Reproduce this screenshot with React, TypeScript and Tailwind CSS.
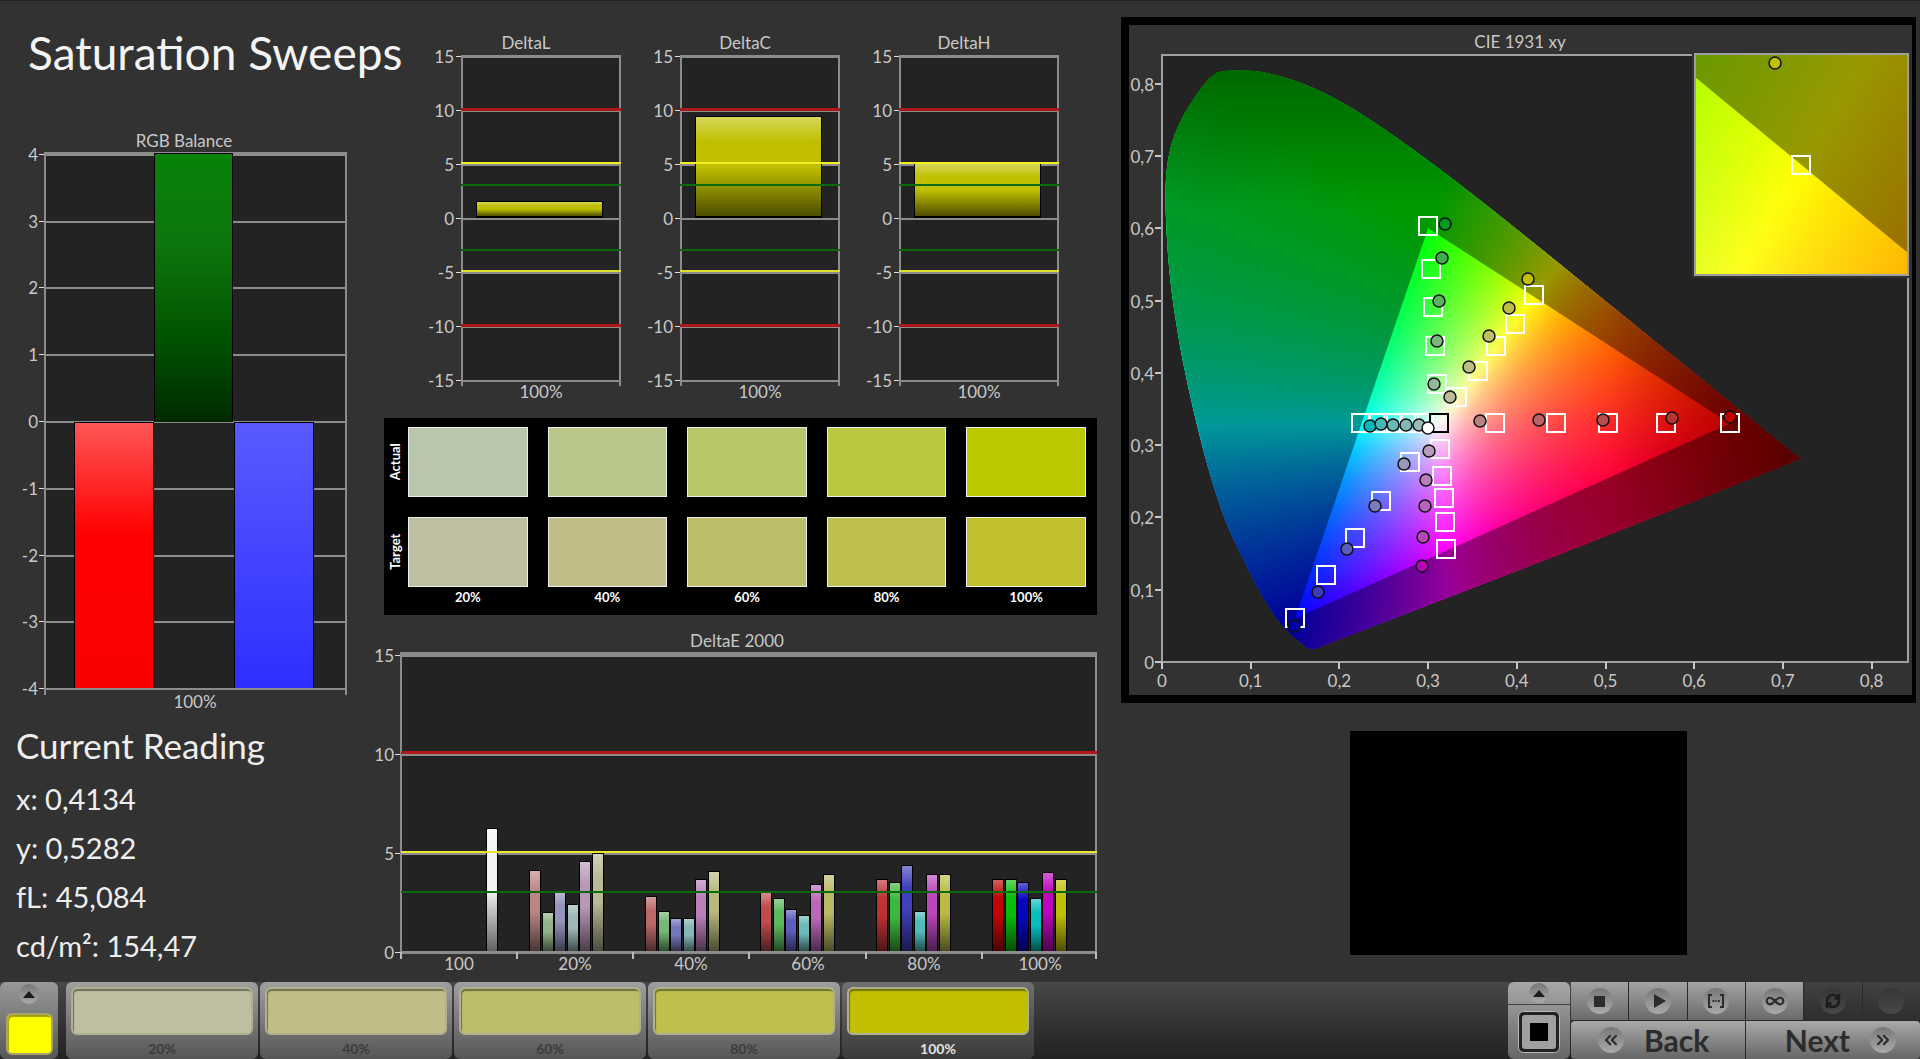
import React from 'react';
import { clsx } from 'clsx';
import { ChevronsLeft, ChevronsRight, Infinity as InfinityIcon, RefreshCw } from 'lucide-react';

const GRID = '#8c8c8c';
const LABEL = '#c8c8c8';

/* ---------- shared chart pieces ---------- */

interface BarProps {
    x: number;
    y: number;
    width: number;
    bottom: number;
    color: string;
    shade?: string;
}

const Bar: React.FC<BarProps> = ({ x, y, width, bottom, color, shade = 'url(#gloss)' }) => (
    <g>
        <rect x={x - 1} y={y - 1} width={width + 2} height={bottom - y + 1} fill="#000" />
        <rect x={x} y={y} width={width} height={bottom - y} fill={color} />
        <rect x={x} y={y} width={width} height={bottom - y} fill={shade} />
    </g>
);

const GlossDefs: React.FC = () => (
    <svg className="absolute h-0 w-0" aria-hidden="true">
        <defs>
            <linearGradient id="gloss" x1="0" y1="0" x2="0" y2="1">
                <stop offset="0" stopColor="#fff" stopOpacity="0.36" />
                <stop offset="0.25" stopColor="#fff" stopOpacity="0" />
                <stop offset="0.5" stopColor="#000" stopOpacity="0" />
                <stop offset="1" stopColor="#000" stopOpacity="0.6" />
            </linearGradient>
        </defs>
    </svg>
);

/* ---------- RGB balance ---------- */

const RGB_TICKS = [4, 3, 2, 1, 0, -1, -2, -3, -4];

const RgbBalance: React.FC = () => {
    const toY = (v: number) => Math.round(301 - v * 66.8);
    return (
        <svg viewBox="0 0 360 595" className="block h-auto w-full" role="img" aria-label="RGB Balance">
            <defs>
                <linearGradient id="rgb-green" x1="0" y1="0" x2="0" y2="1">
                    <stop offset="0" stopColor="#088208" />
                    <stop offset="0.35" stopColor="#0d750d" />
                    <stop offset="0.7" stopColor="#005200" />
                    <stop offset="1" stopColor="#002a00" />
                </linearGradient>
                <linearGradient id="rgb-red" x1="0" y1="0" x2="0" y2="1">
                    <stop offset="0" stopColor="#ff5656" />
                    <stop offset="0.42" stopColor="#ff0000" />
                    <stop offset="1" stopColor="#fb0000" />
                </linearGradient>
                <linearGradient id="rgb-blue" x1="0" y1="0" x2="0" y2="1">
                    <stop offset="0" stopColor="#5a5aff" />
                    <stop offset="1" stopColor="#2e2eff" />
                </linearGradient>
            </defs>
            <text x="184" y="27" fontSize="17" textAnchor="middle" fill={LABEL}>RGB Balance</text>
            <rect x="45" y="33" width="301" height="536" fill="#232323" />
            {RGB_TICKS.map(t => (
                <g key={t}>
                    <rect x="39" y={toY(t)} width="6" height="1" fill="#ddd" />
                    <rect x="45" y={toY(t)} width="301" height="2" fill={GRID} />
                    <text x="38" y={toY(t) + 7} fontSize="17" textAnchor="end" fill={LABEL}>{t}</text>
                </g>
            ))}
            <rect x="45" y="32" width="301" height="3" fill={GRID} />
            <Bar x={155} y={34} width={77} bottom={302} color="url(#rgb-green)" shade="none" />
            <Bar x={75} y={303} width={78} bottom={569} color="url(#rgb-red)" shade="none" />
            <Bar x={235} y={303} width={78} bottom={569} color="url(#rgb-blue)" shade="none" />
            <rect x="45" y="568" width="301" height="2" fill={GRID} />
            <rect x="44" y="32" width="2" height="543" fill={GRID} />
            <rect x="345" y="32" width="2" height="543" fill={GRID} />
            <text x="195" y="588" fontSize="17" textAnchor="middle" fill={LABEL}>100%</text>
        </svg>
    );
};

/* ---------- DeltaL / DeltaC / DeltaH ---------- */

const DELTAS = [
    { name: 'DeltaL', top: 201 },
    { name: 'DeltaC', top: 116 },
    { name: 'DeltaH', top: 163 },
];

const DELTA_TICKS = [15, 10, 5, 0, -5, -10, -15];

const LIMITS = [
    { y: 107, h: 3, color: '#b01818' },
    { y: 161, h: 2, color: '#f0f020' },
    { y: 183, h: 2, color: '#0a6a0a' },
    { y: 248, h: 2, color: '#0a6a0a' },
    { y: 269, h: 2, color: '#e0e030' },
    { y: 323, h: 3, color: '#b01818' },
];

const DeltaChart: React.FC<{ name: string; top: number }> = ({ name, top }) => {
    const toY = (v: number) => Math.round(217 - v * 10.8);
    return (
        <svg viewBox="0 0 219 417" className="block h-auto w-full" role="img" aria-label={name}>
            <text x="104" y="48" fontSize="17" textAnchor="middle" fill={LABEL}>{name}</text>
            <rect x="40" y="55" width="158" height="324" fill="#232323" />
            {DELTA_TICKS.map(t => (
                <g key={t}>
                    <rect x="34" y={toY(t)} width="6" height="1" fill="#ddd" />
                    <rect x="40" y={toY(t)} width="158" height="2" fill={GRID} />
                    <text x="32" y={toY(t) + 7} fontSize="17" textAnchor="end" fill={LABEL}>{t}</text>
                </g>
            ))}
            <rect x="40" y="54" width="158" height="3" fill={GRID} />
            <Bar x={55} y={top} width={125} bottom={215} color="#c0c000" />
            <rect x="54" y="215" width="127" height="2" fill="#000" />
            <rect x="39" y="54" width="2" height="331" fill={GRID} />
            <rect x="197" y="54" width="2" height="331" fill={GRID} />
            {LIMITS.map(l => (
                <rect key={l.y} x="39" y={l.y} width="160" height={l.h} fill={l.color} />
            ))}
            <text x="119" y="397" fontSize="17" textAnchor="middle" fill={LABEL}>100%</text>
        </svg>
    );
};

/* ---------- actual / target swatches ---------- */

const LEVELS = ['20%', '40%', '60%', '80%', '100%'];

const SWATCH_ROWS = [
    { label: 'Actual', colors: ['bg-[#b8c6ac]', 'bg-[#b9c78b]', 'bg-[#b8c76a]', 'bg-[#b9c741]', 'bg-[#b9c800]'] },
    { label: 'Target', colors: ['bg-[#bebea2]', 'bg-[#c0be86]', 'bg-[#bebd6a]', 'bg-[#bebf4d]', 'bg-[#c0c02c]'] },
];

const SwatchPanel: React.FC = () => (
    <div className="ml-[14px] bg-black pt-[9px] pr-[11px] pb-2 text-white">
        <div className="flex flex-col gap-5">
            {SWATCH_ROWS.map(row => (
                <div key={row.label} className="flex">
                    <div className="flex w-6 items-center justify-center">
                        <span className="-rotate-90 text-[13px] font-bold">{row.label}</span>
                    </div>
                    <div className="grid flex-1 grid-cols-5 gap-5">
                        {row.colors.map(c => (
                            <div key={c} className={clsx('h-[70px] border border-[#eee]', c)} />
                        ))}
                    </div>
                </div>
            ))}
        </div>
        <div className="grid grid-cols-5 gap-5 pl-6 text-center text-[13px] leading-5 font-bold">
            {LEVELS.map(l => (
                <span key={l}>{l}</span>
            ))}
        </div>
    </div>
);

/* ---------- DeltaE 2000 ---------- */

const DELTA_E = [
    { label: '100', x: 75, start: 103, tops: [214], colors: ['#f4f4f4'] },
    { label: '20%', x: 191, start: 146, tops: [256, 298, 277, 290, 247, 239], colors: ['#bd8686', '#92b28a', '#9494bc', '#9db8b8', '#b898b8', '#b9b998'] },
    { label: '40%', x: 307, start: 262, tops: [282, 297, 304, 304, 265, 257], colors: ['#bd6868', '#76b876', '#7676bc', '#86b6b6', '#b97fb9', '#b9b97c'] },
    { label: '60%', x: 424, start: 377, tops: [278, 284, 295, 301, 270, 260], colors: ['#be4c4c', '#5cb85c', '#5e5ebc', '#6eb9b9', '#b968b9', '#bab963'] },
    { label: '80%', x: 540, start: 493, tops: [265, 268, 251, 297, 260, 260], colors: ['#be3232', '#3cb83c', '#4040bd', '#50baba', '#bb48bb', '#bbbb46'] },
    { label: '100%', x: 656, start: 609, tops: [265, 265, 268, 284, 258, 265], colors: ['#be0606', '#08be08', '#0606be', '#0abebe', '#be06be', '#bebe06'] },
];

const DeltaEChart: React.FC = () => (
    <svg viewBox="-14 0 727 361" className="block h-auto w-full" role="img" aria-label="DeltaE 2000">
        <text x="353" y="32" fontSize="17" textAnchor="middle" fill={LABEL}>DeltaE 2000</text>
        <rect x="17" y="38" width="696" height="299" fill="#232323" />
        {[15, 10, 5, 0].map(t => {
            const y = Math.round(336 - t * 19.8);
            return (
                <g key={t}>
                    <rect x="11" y={y + 1} width="6" height="1" fill="#ddd" />
                    <rect x="17" y={y + 1} width="696" height="2" fill={GRID} />
                    <text x="10" y={y + 8} fontSize="17" textAnchor="end" fill={LABEL}>{t}</text>
                </g>
            );
        })}
        <rect x="17" y="37" width="696" height="3" fill={GRID} />
        {DELTA_E.map(group => (
            <g key={group.label}>
                {group.tops.map((top, i) => (
                    <Bar key={i} x={group.start + Math.round(i * 12.6)} y={top} width={10} bottom={336} color={group.colors[i]} />
                ))}
                <text x={group.x} y="355" fontSize="17" textAnchor="middle" fill={LABEL}>{group.label}</text>
            </g>
        ))}
        <rect x="17" y="336" width="696" height="2" fill={GRID} />
        {[16, 132, 248, 364, 481, 597, 711].map(x => (
            <rect key={x} x={x} y="337" width="2" height="7" fill="#bbb" />
        ))}
        <rect x="16" y="37" width="2" height="300" fill={GRID} />
        <rect x="711" y="37" width="2" height="300" fill={GRID} />
        <rect x="17" y="136" width="696" height="3" fill="#b01818" />
        <rect x="17" y="236" width="696" height="2" fill="#e8e830" />
        <rect x="17" y="276" width="696" height="2" fill="#0a6a0a" />
    </svg>
);

/* ---------- CIE 1931 xy ---------- */

// Plot origin and pixels per chromaticity unit
const OX = 34;
const OY = 636;
const SX = 887;
const SY = 723;

const px = (x: number) => OX + x * SX;
const py = (y: number) => OY - y * SY;

// The red end is listed twice, which keeps that corner sharp
const LOCUS: [number, number][] = [
    [0.18, 0.0185], [0.166, 0.0185], [0.161, 0.022], [0.151, 0.0331], [0.144, 0.0395], [0.1355, 0.0514], [0.1241, 0.0696],
    [0.1096, 0.0984], [0.0913, 0.1427], [0.0687, 0.2007], [0.0454, 0.295], [0.0235, 0.4127], [0.0135, 0.4873],
    [0.0082, 0.5384], [0.0046, 0.6], [0.0035, 0.6548], [0.0062, 0.695], [0.0135, 0.729], [0.0255, 0.76], [0.041, 0.788],
    [0.051, 0.8045], [0.06, 0.814], [0.0695, 0.818], [0.1055, 0.818], [0.128, 0.812], [0.1547, 0.8025],
    [0.1929, 0.7816], [0.2296, 0.7543], [0.2658, 0.7243], [0.3016, 0.6923], [0.3373, 0.6589], [0.3731, 0.6245],
    [0.4087, 0.5896], [0.4441, 0.5547], [0.4788, 0.5202], [0.5125, 0.4866], [0.5448, 0.4544], [0.5752, 0.4242],
    [0.6029, 0.3965], [0.627, 0.3725], [0.6482, 0.3514], [0.6658, 0.334], [0.6801, 0.3197], [0.6915, 0.3083],
    [0.7197, 0.281], [0.7197, 0.281],
];

// Closed curve through the midpoints, with the locus points as control points
const locusPath = LOCUS.map(([x, y], i) => {
    const [nx, ny] = LOCUS[(i + 1) % LOCUS.length];
    const mid = `${px((x + nx) / 2).toFixed(1)} ${py((y + ny) / 2).toFixed(1)}`;
    return i === 0 ? `M${mid}` : `Q${px(x).toFixed(1)} ${py(y).toFixed(1)} ${mid}`;
}).join('') + 'Z';
const gamutPath = `M${px(0.3)} ${py(0.6)}L${px(0.64)} ${py(0.33)}L${px(0.15)} ${py(0.06)}Z`;

const chromaColor = (x: number, y: number) => {
    const yy = Math.max(y, 0.004);
    const X = x / yy;
    const Z = (1 - x - yy) / yy;
    const lin = [
        3.2406 * X - 1.5372 - 0.4986 * Z,
        -0.9689 * X + 1.8758 + 0.0415 * Z,
        0.0557 * X - 0.204 + 1.057 * Z,
    ].map(v => Math.max(v, 0));
    const max = Math.max(...lin);
    let fade = 1;
    if (x > 0.5) fade -= Math.min((x - 0.5) * 2, 0.42);
    if (y > 0.63) fade -= (y - 0.63) * 1.7;
    return `rgb(${lin.map(v => Math.round(255 * fade * Math.pow(v / max, 0.9))).join(',')})`;
};

interface FieldProps {
    id: string;
    left: number;
    top: number;
    width: number;
    height: number;
    step: number;
    stops: number;
    toX: (p: number) => number;
    toY: (p: number) => number;
}

// Fills an area with horizontal strips, each a gradient sampled from the chromaticity plane.
// Strips overlap downwards, so no seam shows between two of them.
const ChromaField: React.FC<FieldProps> = ({ id, left, top, width, height, step, stops, toX, toY }) => {
    const rows = Array.from({ length: Math.ceil(height / step) }, (_, i) => top + i * step);
    return (
        <g shapeRendering="crispEdges">
            {rows.map(y => (
                <g key={y}>
                    <linearGradient id={`${id}-${y}`}>
                        {Array.from({ length: stops + 1 }, (_, i) => (
                            <stop key={i} offset={i / stops} stopColor={chromaColor(toX(left + (i / stops) * width), toY(y + step / 2))} />
                        ))}
                    </linearGradient>
                    <rect x={left} y={y} width={width} height={Math.min(step * 3, top + height - y)} fill={`url(#${id}-${y})`} />
                </g>
            ))}
        </g>
    );
};

const TARGETS: [number, number][] = [
    [300, 200], [303, 243], [305, 281], [307, 320], [309, 358],
    [406, 269], [387, 298], [368, 320], [350, 345], [329, 371],
    [602, 397], [538, 397], [480, 397], [428, 397], [367, 397],
    [233, 397], [250, 397], [265, 397], [281, 397], [296, 397],
    [167, 592], [198, 549], [227, 512], [253, 475], [282, 436],
    [318, 523], [317, 496], [316, 472], [314, 450], [312, 423],
];

const READINGS: [number, number, string][] = [
    [317, 198, '#009a20'], [314, 232, '#3eae4a'], [311, 275, '#5ab262'], [309, 315, '#78b880'], [306, 358, '#94b898'],
    [400, 253, '#c0c000'], [381, 282, '#bebe48'], [361, 310, '#bebe68'], [341, 341, '#bebe84'], [322, 371, '#bcbc9c'],
    [602, 391, '#c00000'], [544, 392, '#b93434'], [475, 394, '#b94c4c'], [411, 394, '#b96464'], [352, 395, '#b98282'],
    [242, 400, '#00b8b8'], [253, 398, '#44b8b4'], [265, 399, '#68b8b4'], [278, 399, '#84b8b4'], [291, 399, '#9cbab8'],
    [301, 425, '#b89cb8'], [298, 454, '#b880b8'], [297, 480, '#b864b8'], [295, 511, '#b844b8'], [294, 540, '#b800b8'],
    [276, 438, '#9898bc'], [247, 480, '#7a7abc'], [219, 523, '#5c5cbc'], [190, 566, '#3c3cb8'], [166, 600, '#0000a8'],
    [300, 402, '#ffffff'],
];

const TENTHS = [0, 1, 2, 3, 4, 5, 6, 7, 8];
const tickLabel = (t: number) => (t === 0 ? '0' : `0,${t}`);

const CieChart: React.FC = () => (
    <svg viewBox="1 -1 783 670" className="block h-auto w-full" role="img" aria-label="CIE 1931 xy">
        <defs>
            <clipPath id="locus"><path d={locusPath} /></clipPath>
        </defs>
        <text x="392" y="22" fontSize="17" textAnchor="middle" fill={LABEL}>CIE 1931 xy</text>
        <rect x="34" y="28" width="746" height="608" fill="#232323" />
        <g clipPath="url(#locus)">
            <ChromaField
                id="cie" left={34} top={42} width={646} height={584} step={2} stops={64}
                toX={p => (p - OX) / SX} toY={p => (OY - p) / SY}
            />
            <path d={`M0 0H784V670H0Z${gamutPath}`} fillRule="evenodd" fill="#000" fillOpacity="0.4" />
        </g>
        <rect x="33" y="28" width="747" height="2" fill="#a0a0a0" />
        <rect x="33" y="28" width="2" height="608" fill="#a0a0a0" />
        <rect x="779" y="28" width="2" height="609" fill="#a0a0a0" />
        <rect x="33" y="635" width="748" height="2" fill="#a0a0a0" />
        {TENTHS.map(t => (
            <g key={t} fill={LABEL} fontSize="17">
                <rect x={Math.round(px(t / 10)) - 1} y="636" width="2" height="7" />
                <text x={px(t / 10)} y="661" textAnchor="middle">{tickLabel(t)}</text>
                <rect x="27" y={Math.round(py(t / 10)) - 1} width="6" height="2" />
                <text x="26" y={py(t / 10) + 7} textAnchor="end">{tickLabel(t)}</text>
            </g>
        ))}
        {TARGETS.map(([x, y]) => (
            <rect key={`${x}-${y}`} x={x - 9} y={y - 9} width="18" height="18" fill="none" stroke="#fff" strokeWidth="2" />
        ))}
        <rect x="302" y="388" width="18" height="18" fill="none" stroke="#000" strokeWidth="2" />
        {READINGS.map(([x, y, color]) => (
            <circle key={`${x}-${y}`} cx={x} cy={y} r="6" fill={color} stroke="#111" strokeWidth="1.5" />
        ))}

        {/* magnified view around the current target */}
        <rect x="564" y="26" width="220" height="226" fill="#323232" />
        <ChromaField
            id="inset" left={567} top={29} width={213} height={221} step={2} stops={12}
            toX={p => 0.419 + (p - 673) / (SX * 4.4)} toY={p => 0.505 - (p - 140) / (SY * 5.6)}
        />
        <path d="M567 51V29H780V227Z" fill="#000" fillOpacity="0.4" />
        <rect x="567" y="28" width="213" height="221" fill="none" stroke="#a0a09a" strokeWidth="2" />
        <circle cx="647" cy="37" r="6" fill="#c0c000" stroke="#111" strokeWidth="1.5" />
        <rect x="664" y="130" width="18" height="18" fill="none" stroke="#fff" strokeWidth="2" />
    </svg>
);

/* ---------- current reading ---------- */

const READOUT = ['x: 0,4134', 'y: 0,5282', 'fL: 45,084', 'cd/m²: 154,47'];

const CurrentReading: React.FC = () => (
    <section className="pl-4 text-[#eee]">
        <h2 className="pt-[6px] pb-[5px] text-[35px] leading-[48px]">Current Reading</h2>
        {READOUT.map(line => (
            <p key={line} className="text-[29px] leading-[49px]">{line}</p>
        ))}
    </section>
);

/* ---------- bottom bar ---------- */

const PATCHES = [
    { label: '20%', color: 'bg-[#bebea2]' },
    { label: '40%', color: 'bg-[#c0be86]' },
    { label: '60%', color: 'bg-[#bebd6a]' },
    { label: '80%', color: 'bg-[#bebf4d]' },
    { label: '100%', color: 'bg-[#c0c000]', active: true },
];

const Disc: React.FC<{ small?: boolean; dim?: boolean; children?: React.ReactNode }> = ({ small, dim, children }) => (
    <span
        className={clsx(
            'flex items-center justify-center rounded-full bg-linear-to-b',
            small ? 'size-5' : 'size-[26px]',
            dim ? 'from-[#363636] to-[#484848] text-[#1c1c1c]' : 'from-[#777] to-[#aaa] text-[#2c2c2c]'
        )}
    >
        {children}
    </span>
);

const UpArrow: React.FC = () => (
    <svg viewBox="0 0 12 7" className="h-[7px] w-3"><path d="M6 0L12 7H0Z" fill="#1c1c1c" /></svg>
);

const TRANSPORT = [
    { name: 'Stop', icon: <svg viewBox="0 0 11 11" className="size-[11px]"><rect width="11" height="11" fill="#2c2c2c" /></svg> },
    { name: 'Play', icon: <svg viewBox="0 0 12 14" className="ml-1 h-[14px] w-3"><path d="M0 0L12 7L0 14Z" fill="#2c2c2c" /></svg> },
    {
        name: 'Read series',
        icon: (
            <svg viewBox="0 0 18 14" className="h-[14px] w-[18px]" fill="none" stroke="#2c2c2c" strokeWidth="2">
                <path d="M5 1H2V13H5M13 1H16V13H13M5.5 7H7.5M8.5 7H9.8M10.8 7H12.8" />
            </svg>
        ),
    },
    { name: 'Read continuously', icon: <InfinityIcon size={20} strokeWidth={2.5} /> },
    { name: 'Refresh', icon: <RefreshCw size={16} strokeWidth={4} />, dim: true },
    { name: 'Record', icon: null, dim: true },
];

const BottomBar: React.FC = () => (
    <footer className="flex h-[77px] justify-between bg-linear-to-b from-[#484848] to-[#222]">
        <div className="flex">
            <div className="mr-2 flex w-[58px] flex-col items-center rounded-md bg-linear-to-b from-[#999] to-[#585858] pt-[2px]">
                <button aria-label="Show patch list"><Disc small><UpArrow /></Disc></button>
                <button aria-label="Current patch" className="mt-[9px] h-[42px] w-[47px] rounded-md border-2 border-[#a5a56c] bg-[#ff0] shadow-[inset_1px_2px_1px_#a0a000]" />
            </div>
            <div className="flex gap-[2px]">
                {PATCHES.map(p => (
                    <button
                        key={p.label}
                        className={clsx(
                            'flex w-48 flex-col items-center rounded-md bg-linear-to-b px-[5px] pt-[5px]',
                            p.active ? 'from-[#707070] to-[#3a3a3a]' : 'from-[#a0a0a0] to-[#565656]'
                        )}
                    >
                        <span className={clsx('h-12 w-full rounded-md border-2 border-[#b0b090] shadow-[inset_1px_2px_1px_rgba(0,0,0,0.4)]', p.color)} />
                        <span className={clsx('mt-1 text-[14px] leading-5 font-bold', p.active ? 'text-[#e4e4e4]' : 'text-[#3c3c3c]')}>
                            {p.label}
                        </span>
                    </button>
                ))}
            </div>
        </div>

        <div className="flex">
            <div className="flex w-[62px] flex-col rounded-md bg-linear-to-b from-[#a8a8a8] to-[#666]">
                <button aria-label="Show pattern options" className="flex h-[23px] items-center justify-center border-b border-[#444]">
                    <Disc small><UpArrow /></Disc>
                </button>
                <button aria-label="Window pattern" className="flex flex-1 items-center justify-center">
                    <svg viewBox="0 0 44 44" className="size-11">
                        <rect x="1.5" y="1.5" width="41" height="41" rx="5" fill="#222" stroke="#bbb" />
                        <rect x="5" y="5" width="34" height="34" rx="3" fill="#a0a0a0" />
                        <rect x="13" y="13" width="18" height="18" fill="#000" />
                    </svg>
                </button>
            </div>
            <div className="ml-px flex w-[349px] flex-col gap-px bg-[#2a2a2a]">
                <div className="grid flex-1 grid-cols-6 gap-px">
                    {TRANSPORT.map(t => (
                        <button
                            key={t.name}
                            aria-label={t.name}
                            className={clsx(
                                'flex items-center justify-center bg-linear-to-b',
                                t.dim ? 'from-[#424242] to-[#2e2e2e]' : 'from-[#a4a4a4] to-[#6a6a6a]'
                            )}
                        >
                            <Disc dim={t.dim}>{t.icon}</Disc>
                        </button>
                    ))}
                </div>
                <div className="grid flex-1 grid-cols-2 gap-px text-[30px] leading-none font-bold text-[#2c2c2c]">
                    <button className="flex items-center gap-5 rounded-l-sm bg-linear-to-b from-[#aaa] to-[#666] pl-[27px]">
                        <Disc><ChevronsLeft size={20} strokeWidth={2.5} /></Disc>
                        Back
                    </button>
                    <button className="flex items-center justify-end gap-5 rounded-r-sm bg-linear-to-b from-[#aaa] to-[#666] pr-6">
                        Next
                        <Disc><ChevronsRight size={20} strokeWidth={2.5} /></Disc>
                    </button>
                </div>
            </div>
        </div>
    </footer>
);

export default function App() {
    return (
        <div className="flex min-h-screen flex-col border-t border-[#222] bg-[#323232] font-['Lato','Noto_Sans',sans-serif]">
            <GlossDefs />
            <main className="grid flex-1 grid-cols-[minmax(0,370fr)_minmax(0,727fr)_minmax(0,823fr)] items-start">
                <div>
                    <h1 className="pt-5 pb-9 pl-7 text-[46px] leading-[63px] whitespace-nowrap text-[#f4f4f4]">Saturation Sweeps</h1>
                    <div className="pr-[10px]">
                        <RgbBalance />
                    </div>
                    <CurrentReading />
                </div>
                <div>
                    <div className="grid grid-cols-3 pr-[18px] pl-[52px]">
                        {DELTAS.map(d => (
                            <DeltaChart key={d.name} name={d.name} top={d.top} />
                        ))}
                    </div>
                    <SwatchPanel />
                    <DeltaEChart />
                </div>
                <div className="pt-4 pr-1 pl-6">
                    <div className="border-8 border-r-4 border-black">
                        <CieChart />
                    </div>
                    <div className="mx-auto mt-7 h-56 w-[337px] bg-black" />
                </div>
            </main>
            <BottomBar />
        </div>
    );
}
